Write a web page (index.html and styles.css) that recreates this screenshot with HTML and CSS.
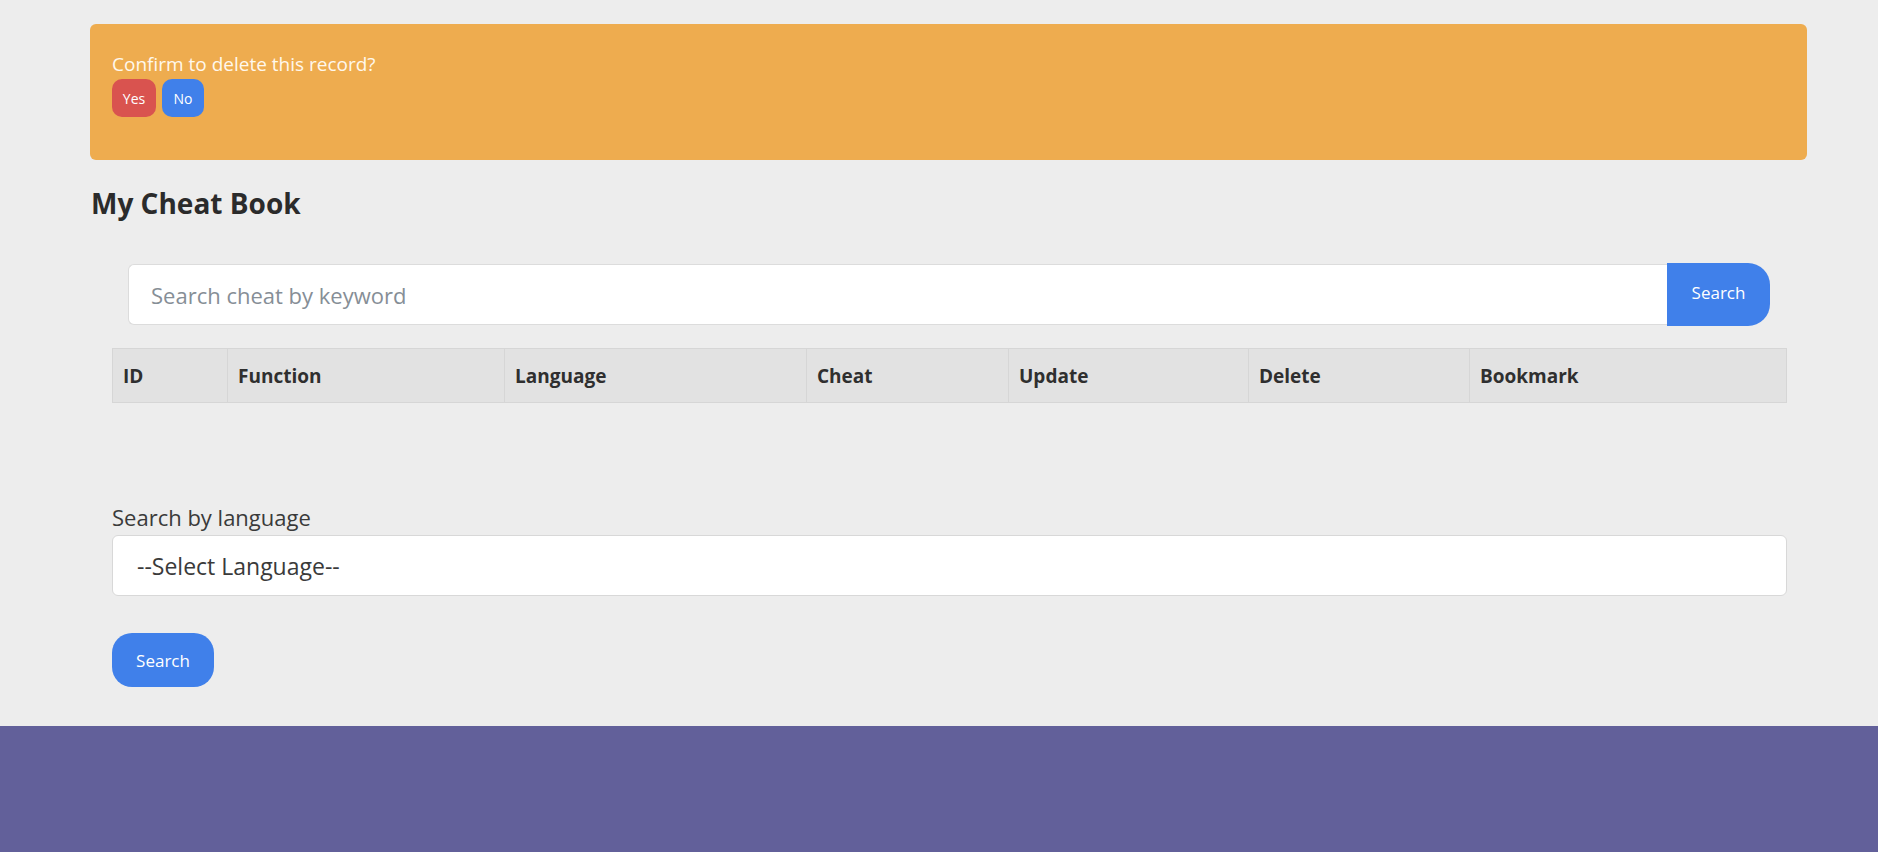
FILE: index.html
```html
<!DOCTYPE html>
<html lang="en">
<head>
<meta charset="utf-8">
<title>My Cheat Book</title>
<link rel="stylesheet" href="styles.css">
</head>
<body>
<main class="page">
  <div class="alert">
    <p class="alert-text">Confirm to delete this record?</p>
    <div class="alert-actions">
      <button class="btn-sm btn-yes">Yes</button>
      <button class="btn-sm btn-no">No</button>
    </div>
  </div>

  <h1 class="title">My Cheat Book</h1>

  <section class="content">
    <form class="search-row">
      <input class="search-input" type="text" placeholder="Search cheat by keyword">
      <button class="search-btn" type="button">Search</button>
    </form>

    <table class="cheat-table">
      <thead>
        <tr>
          <th class="c-id">ID</th>
          <th class="c-fn">Function</th>
          <th class="c-lang">Language</th>
          <th class="c-cheat">Cheat</th>
          <th class="c-upd">Update</th>
          <th class="c-del">Delete</th>
          <th class="c-bm">Bookmark</th>
        </tr>
      </thead>
    </table>

    <div class="lang-form">
      <label class="lang-label" for="lang">Search by language</label>
      <div class="select-box" id="lang">--Select Language--</div>
      <button class="lang-btn" type="button">Search</button>
    </div>
  </section>
</main>
<footer class="footer"></footer>
</body>
</html>
```

FILE: styles.css
```css
* { box-sizing: border-box; }
html, body { margin: 0; padding: 0; }
body {
  background: #ededed;
  font-family: "Open Sans", "Noto Sans", Arial, sans-serif;
  color: #333;
  width: 1878px;
  height: 852px;
  overflow: hidden;
}
.page {
  width: 1717px;
  margin-left: 90px;
  padding-top: 24px;
  height: 726px;
}
.alert {
  background: #eeac4f;
  border-radius: 6px;
  height: 136px;
  padding: 27px 22px 0;
}
.alert-text {
  margin: 0;
  color: #fff8ec;
  font-size: 19px;
  line-height: 26px;
}
.alert-actions {
  display: flex;
  gap: 6px;
  margin-top: 2px;
}
.btn-sm {
  border: none;
  height: 38px;
  border-radius: 10px;
  color: #fff;
  font-family: inherit;
  font-size: 14px;
  padding: 0;
}
.btn-yes { background: #d9534f; width: 44px; }
.btn-no { background: #4080ea; width: 42px; }

.title {
  margin: 24px 0 0 1px;
  font-size: 28px;
  line-height: 38px;
  font-weight: 700;
  color: #2b2b2b;
}
.content {
  margin: 0 20px 0 22px;
}
.search-row {
  display: flex;
  align-items: center;
  margin: 41px 17px 0 16px;
}
.search-input {
  flex: 1;
  height: 61px;
  border: 1px solid #dcdcdc;
  border-right: none;
  border-radius: 6px 0 0 6px;
  background: #fff;
  padding: 0 22px;
  font-family: inherit;
  font-size: 22px;
  color: #333;
  outline: none;
}
.search-input::placeholder { color: #868e96; }
.search-btn {
  width: 103px;
  height: 63px;
  border: none;
  background: #4080ea;
  color: #fff;
  border-radius: 0 22px 22px 0;
  font-family: inherit;
  font-size: 17px;
  padding: 0 0 4px;
}
.cheat-table {
  width: 100%;
  margin-top: 22px;
  border-collapse: collapse;
  table-layout: fixed;
}
.cheat-table th {
  background: #e2e2e2;
  border: 1px solid #d6d6d6;
  height: 54px;
  padding: 0 10px;
  text-align: left;
  font-size: 19px;
  font-weight: 700;
  color: #2f2f2f;
}
.c-id { width: 115px; }
.c-fn { width: 277px; }
.c-lang { width: 302px; }
.c-cheat { width: 202px; }
.c-upd { width: 240px; }
.c-del { width: 221px; }
.lang-form {
  margin-top: 99px;
  display: flex;
  flex-direction: column;
  align-items: flex-start;
}
.lang-label {
  font-size: 22px;
  line-height: 30px;
  color: #3a3a3a;
}
.select-box {
  width: 100%;
  height: 61px;
  margin-top: 3px;
  background: #fff;
  border: 1px solid #d8d8d8;
  border-radius: 6px;
  padding: 0 24px;
  display: flex;
  align-items: center;
  font-size: 23px;
  color: #3a3a3a;
}
.lang-btn {
  margin-top: 37px;
  width: 102px;
  height: 54px;
  border: none;
  border-radius: 20px;
  background: #4080ea;
  color: #fff;
  font-family: inherit;
  font-size: 17px;
  padding: 0;
}
.footer {
  height: 126px;
  background: #62609a;
}
```
